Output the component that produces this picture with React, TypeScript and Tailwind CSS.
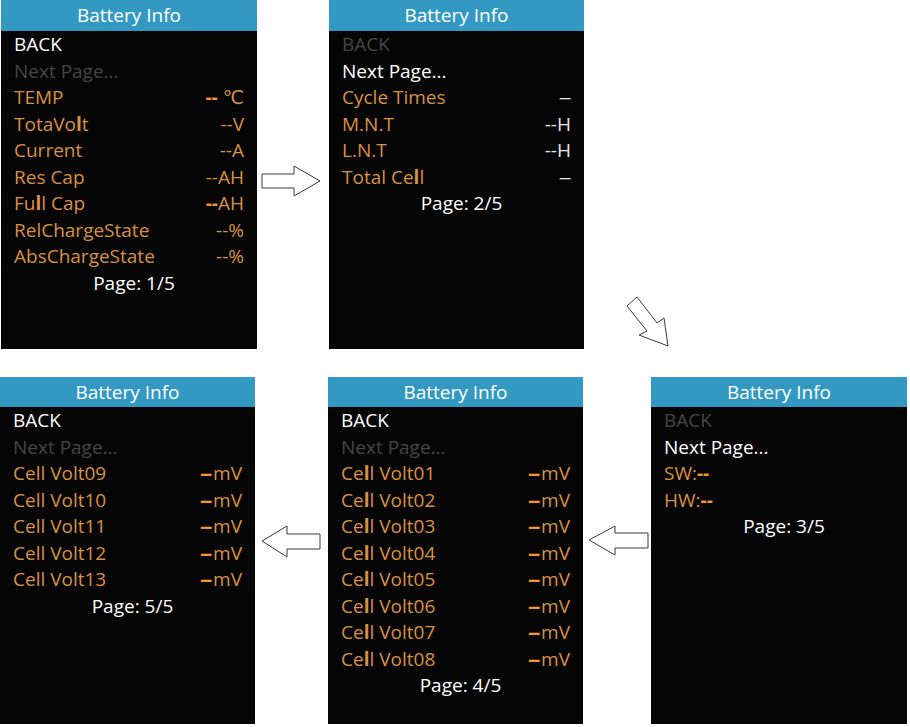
import React from "react";

type Row = {
  label: React.ReactNode;
  value?: React.ReactNode;
  tone: "white" | "dim" | "orange";
};

const toneClass = {
  white: "text-white",
  dim: "text-[#454545]",
  orange: "text-[#d9913f]",
};

const Dash = ({ children }: { children: React.ReactNode }) => (
  <span className="font-bold text-[#f0982e]">{children}</span>
);

// long single dash used for empty readings
const LongDash = ({ bold }: { bold?: boolean }) => (
  <span
    className={`inline-block scale-x-[1.35] origin-right ${bold ? "font-bold text-[#f0982e] mr-[1px]" : "text-[#e8e8e8]"}`}
  >
    –
  </span>
);

const Screen = ({
  rows,
  page,
  width,
  headerHeight,
}: {
  rows: Row[];
  page: string;
  width: string;
  headerHeight: string;
}) => {
  return (
    <div className={`${width} h-full flex flex-col bg-[#050505]`}>
      <div
        className={`${headerHeight} bg-[#3399c3] flex items-center justify-center text-white text-[19px] leading-none`}
      >
        Battery Info
      </div>
      <div className="flex flex-col px-[13px] text-[19px] leading-[26.5px]">
        {rows.map((row, i) => (
          <div key={i} className={`flex justify-between ${toneClass[row.tone]}`}>
            <span>{row.label}</span>
            {row.value && <span>{row.value}</span>}
          </div>
        ))}
        <div className="text-white text-center pl-[10px]">{page}</div>
      </div>
    </div>
  );
};

const page1: Row[] = [
  { label: "BACK", tone: "white" },
  { label: "Next Page...", tone: "dim" },
  { label: "TEMP", value: <><Dash>--</Dash> ℃</>, tone: "orange" },
  { label: <>TotaVo<b className="font-bold">l</b>t</>, value: "--V", tone: "orange" },
  { label: "Current", value: "--A", tone: "orange" },
  { label: "Res Cap", value: "--AH", tone: "orange" },
  { label: <>Fu<b className="font-bold">l</b>l Cap</>, value: <><Dash>--</Dash>AH</>, tone: "orange" },
  { label: "RelChargeState", value: "--%", tone: "orange" },
  { label: "AbsChargeState", value: "--%", tone: "orange" },
];

const page2: Row[] = [
  { label: "BACK", tone: "dim" },
  { label: "Next Page...", tone: "white" },
  { label: "Cycle Times", value: <LongDash />, tone: "orange" },
  { label: "M.N.T", value: <span className="text-[#e8e8e8]">--H</span>, tone: "orange" },
  { label: "L.N.T", value: <span className="text-[#e8e8e8]">--H</span>, tone: "orange" },
  { label: <>Total Ce<b className="font-bold">l</b>l</>, value: <LongDash />, tone: "orange" },
];

const page3: Row[] = [
  { label: "BACK", tone: "dim" },
  { label: "Next Page...", tone: "white" },
  { label: <>SW:<Dash>--</Dash></>, tone: "orange" },
  { label: <>HW:<Dash>--</Dash></>, tone: "orange" },
];

const cellRows = (from: number, to: number, boldL: boolean): Row[] => {
  const out: Row[] = [
    { label: "BACK", tone: "white" },
    { label: "Next Page...", tone: "dim" },
  ];
  for (let n = from; n <= to; n++) {
    out.push({
      label: (
        <>
          Ce{boldL ? <b className="font-bold">l</b> : "l"}l Volt{String(n).padStart(2, "0")}
        </>
      ),
      value: <><LongDash bold />mV</>,
      tone: "orange",
    });
  }
  return out;
};

export default function App() {
  return (
    <div
      className="w-[910px] h-[727px] bg-white flex flex-col"
      style={{ fontFamily: '"Open Sans", "DejaVu Sans", sans-serif' }}
    >
      {/* top row: pages 1 and 2 */}
      <div className="flex h-[349px] pl-[1px]">
        <Screen rows={page1} page="Page: 1/5" width="w-[256px]" headerHeight="h-[31px]" />
        <svg className="w-[72px] h-full" viewBox="0 0 72 349">
          <polygon
            points="5,174 37,174 37,166 63,181 37,196 37,188 5,188"
            fill="#fff"
            stroke="#3a3a3a"
            strokeWidth="1"
          />
        </svg>
        <Screen rows={page2} page="Page: 2/5" width="w-[255px]" headerHeight="h-[31px]" />
        <svg className="flex-1 h-full" viewBox="0 0 325 349" preserveAspectRatio="xMinYMin meet">
          <polygon
            points="53,297 73,323 80,318 84,346 55,335 63,331 43,306"
            fill="#fff"
            stroke="#3a3a3a"
            strokeWidth="1"
          />
        </svg>
      </div>

      {/* bottom row: pages 5, 4, 3 */}
      <div className="flex h-[347px] mt-[28px]">
        <Screen rows={cellRows(9, 13, false)} page="Page: 5/5" width="w-[255px]" headerHeight="h-[30px]" />
        <svg className="w-[73px] h-full" viewBox="0 0 73 347">
          <polygon
            points="7,164 32,149 32,157 65,157 65,172 32,172 32,180"
            fill="#fff"
            stroke="#3a3a3a"
            strokeWidth="1"
          />
        </svg>
        <Screen rows={cellRows(1, 8, true)} page="Page: 4/5" width="w-[255px]" headerHeight="h-[30px]" />
        <svg className="w-[68px] h-full" viewBox="0 0 68 347">
          <polygon
            points="6,163 32,149 32,156 65,156 65,171 32,171 32,178"
            fill="#fff"
            stroke="#3a3a3a"
            strokeWidth="1"
          />
        </svg>
        <Screen rows={page3} page="Page: 3/5" width="w-[256px]" headerHeight="h-[30px]" />
      </div>
    </div>
  );
}
